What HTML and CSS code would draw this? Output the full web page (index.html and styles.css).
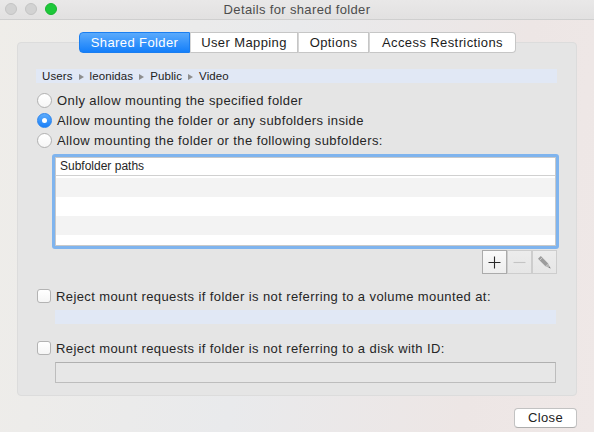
FILE: index.html
```html
<!DOCTYPE html>
<html>
<head>
<meta charset="utf-8">
<link rel="stylesheet" href="styles.css">
</head>
<body>
<div class="window">
  <div class="titlebar">
    <div class="lights">
      <span class="light"></span>
      <span class="light"></span>
      <span class="light green"></span>
    </div>
    <div class="title">Details for shared folder</div>
  </div>
  <div class="main">
    <div class="tabs">
      <div class="tab active">Shared Folder</div>
      <div class="tab">User Mapping</div>
      <div class="tab">Options</div>
      <div class="tab">Access Restrictions</div>
    </div>
    <div class="group">
      <div class="pathbar">
        <span>Users</span><span class="arrow"></span>
        <span>leonidas</span><span class="arrow"></span>
        <span>Public</span><span class="arrow"></span>
        <span>Video</span>
      </div>
      <div class="radios">
        <label class="radio-row"><span class="radio"></span>Only allow mounting the specified folder</label>
        <label class="radio-row"><span class="radio checked"></span>Allow mounting the folder or any subfolders inside</label>
        <label class="radio-row"><span class="radio"></span>Allow mounting the folder or the following subfolders:</label>
      </div>
      <div class="table">
        <div class="table-inner">
          <div class="thead">Subfolder paths</div>
          <div class="trow alt"></div>
          <div class="trow"></div>
          <div class="trow alt"></div>
          <div class="trow last"></div>
        </div>
      </div>
      <div class="tbuttons">
        <div class="tbtn enabled">
          <svg width="13" height="13" viewBox="0 0 13 13"><path d="M6.5 0.5V12.5M0.5 6.5H12.5" stroke="#2a2a2a" stroke-width="1.1" fill="none"/></svg>
        </div>
        <div class="tbtn">
          <svg width="13" height="13" viewBox="0 0 13 13"><path d="M0.5 6.5H12.5" stroke="#c4c4c4" stroke-width="1.1" fill="none"/></svg>
        </div>
        <div class="tbtn">
          <svg width="15" height="15" viewBox="0 0 15 15"><path d="M1 3.8L3.8 1L11.2 8.4L8.4 11.2Z" fill="#9c9c9c"/><path d="M8.4 11.2L11.2 8.4L13.6 13.6Z" fill="#b4b4b4"/><path d="M12.6 11.5L13.6 13.6L11.5 12.6Z" fill="#777"/><path d="M2.6 5.4L5.4 2.6" stroke="#cfcfcf" stroke-width="0.9"/></svg>
        </div>
      </div>
      <label class="check-row first"><span class="checkbox"></span>Reject mount requests if folder is not referring to a volume mounted at:</label>
      <div class="field blue"></div>
      <label class="check-row"><span class="checkbox"></span>Reject mount requests if folder is not referring to a disk with ID:</label>
      <div class="field grey"></div>
    </div>
    <div class="footer">
      <div class="button">Close</div>
    </div>
  </div>
</div>
</body>
</html>
```
FILE: styles.css
```css
* { box-sizing: border-box; }
html, body { margin: 0; padding: 0; }
body {
  font-family: "Liberation Sans", Arial, sans-serif;
  font-size: 13px;
  letter-spacing: 0.4px;
  color: #262626;
}
.window {
  width: 594px;
  height: 432px;
  overflow: hidden;
  background: linear-gradient(100deg, #efede9 0%, #e9eaec 45%, #ede6e5 80%, #efe8e7 100%);
  display: flex;
  flex-direction: column;
}
.titlebar {
  height: 20px;
  border-bottom: 1px solid #cfcfcf;
  background: linear-gradient(#e9e8e8, #e2e1e1);
  position: relative;
  display: flex;
  align-items: center;
  justify-content: center;
}
.lights {
  position: absolute;
  left: 5px;
  top: 3px;
  display: flex;
  gap: 8px;
}
.light {
  width: 12px;
  height: 12px;
  border-radius: 50%;
  background: #d2d2d2;
  border: 1px solid #c4c4c4;
}
.light.green {
  background: #1dc83a;
  border-color: #17b52f;
}
.title {
  color: #4d4d4d;
  font-size: 13px;
  letter-spacing: 0.35px;
  margin-top: -1px;
}
.main {
  flex: 1;
  padding: 12px 17px 0 17px;
  display: flex;
  flex-direction: column;
}
.tabs {
  display: flex;
  justify-content: center;
  position: relative;
  z-index: 1;
  margin-left: 1px;
}
.tab {
  height: 21px;
  line-height: 19px;
  padding: 0;
  white-space: nowrap;
  text-align: center;
  background: #fff;
  border: 1px solid #c6c6c6;
  border-left: 1px solid #d6d6d6;
  color: #1c1c1c;
  font-size: 13px;
}
.tab:first-child { border-radius: 4px 0 0 4px; border-left-color: #c6c6c6; }
.tab:last-child { border-radius: 0 4px 4px 0; }
.tab:nth-child(1) { width: 111px; }
.tab:nth-child(2) { width: 108px; }
.tab:nth-child(3) { width: 71px; }
.tab:nth-child(4) { width: 147px; }
.tab.active {
  background: linear-gradient(#5aaafc, #147ffa);
  border-color: #1a7ef0;
  color: #fff;
}
.group {
  margin-top: -11px;
  height: 354px;
  width: 560px;
  background: #e5e5e5;
  border: 1px solid #dcdcdc;
  border-radius: 4px;
  padding: 26px 19px 0 18px;
  display: flex;
  flex-direction: column;
}
.pathbar {
  height: 14px;
  background: #e1e8f5;
  display: flex;
  align-items: center;
  padding-left: 6px;
  font-size: 11.5px;
  letter-spacing: 0.1px;
  color: #222;
  gap: 5px;
}
.arrow {
  width: 0;
  height: 0;
  border-left: 5px solid #8e8e8e;
  border-top: 3px solid transparent;
  border-bottom: 3px solid transparent;
  margin: 1px 1px 0 1px;
}
.radios {
  margin-top: 7px;
  display: flex;
  flex-direction: column;
}
.radio-row {
  height: 20px;
  display: flex;
  align-items: center;
  gap: 5px;
  color: #262626;
  padding-left: 1px;
}
.radio {
  width: 15px;
  height: 15px;
  border-radius: 50%;
  border: 1px solid #b1b1b1;
  background: linear-gradient(#ffffff, #f6f6f6);
  display: flex;
  align-items: center;
  justify-content: center;
}
.radio.checked {
  background: linear-gradient(#5eacfb, #1a80f9);
  border-color: #2a84ee;
}
.radio.checked::after {
  content: "";
  width: 5px;
  height: 5px;
  border-radius: 50%;
  background: #fff;
}
.table {
  margin-top: 4px;
  margin-left: 16px;
  width: 507px;
  height: 95px;
  border: 3px solid #7fb4ee;
  border-radius: 3px;
  background: #fff;
}
.table-inner {
  height: 100%;
  border: 1px solid #c9c9c9;
  background: #fff;
  overflow: hidden;
}
.thead {
  height: 18px;
  line-height: 16px;
  font-size: 12px;
  letter-spacing: 0;
  color: #262626;
  padding-left: 4px;
  border-bottom: 1px solid #d0d0d0;
  margin-bottom: 2px;
}
.trow { height: 19px; background: #fff; }
.trow.alt { background: #f3f3f3; }
.tbuttons {
  margin-top: 1px;
  display: flex;
  justify-content: flex-end;
}
.tbtn {
  width: 25px;
  height: 24px;
  border: 1px solid #cdcdcd;
  background: linear-gradient(#ececec, #e6e6e6);
  display: flex;
  align-items: center;
  justify-content: center;
}
.tbtn.enabled {
  border-color: #ababab;
  background: linear-gradient(#fafafa, #eeeeee);
}
.check-row {
  height: 20px;
  display: flex;
  align-items: center;
  gap: 5px;
  padding-left: 1px;
  margin-top: 14px;
}
.check-row.first { margin-top: 12px; }
.checkbox {
  width: 14px;
  height: 14px;
  border: 1px solid #b3b3b3;
  border-radius: 3px;
  background: linear-gradient(#ffffff, #f5f5f5);
}
.field {
  margin-top: 4px;
  margin-left: 19px;
  width: 501px;
}
.field.blue {
  height: 14px;
  background: #e1e8f5;
}
.field.grey {
  height: 21px;
  background: #e7e7e7;
  border: 1px solid #bdbdbd;
  border-top-color: #b0b0b0;
}
.footer {
  margin-top: 12px;
  display: flex;
  justify-content: flex-end;
}
.button {
  width: 63px;
  height: 20px;
  background: #fff;
  border: 1px solid #c2c2c2;
  border-bottom-color: #adadad;
  border-radius: 4px;
  text-align: center;
  line-height: 18px;
  font-size: 13px;
  color: #222;
}
```
